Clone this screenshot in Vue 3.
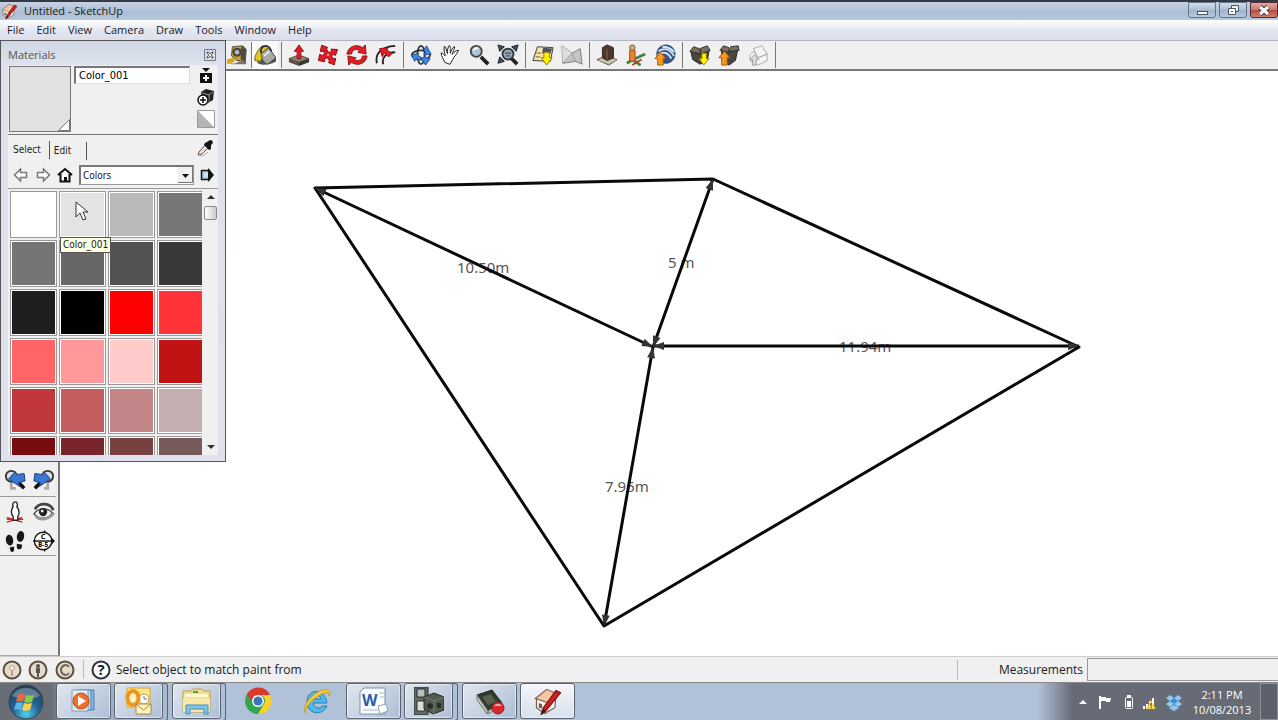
<script setup>
import { ref } from 'vue'

const menus = ['File', 'Edit', 'View', 'Camera', 'Draw', 'Tools', 'Window', 'Help']
const materialName = ref('Color_001')
const library = ref('Colors')
const measurement = ref('')

const swatches = [
  '#ffffff', '#e3e3e3', '#b9b9b9', '#777777',
  '#757575', '#676767', '#525252', '#383838',
  '#1f1e20', '#000000', '#ff0000', '#ff3338',
  '#ff6467', '#ff979b', '#fecaca', '#c11214',
  '#c2373b', '#c45e61', '#c28588', '#c4aeb0',
  '#780d11', '#78262b', '#774141', '#775b5a'
]

const toolGroups = [
  [
    { name: 'Push/Pull', art: '<path d="M1 16 12 12 23 16 12 20Z" fill="#8d8271" stroke="#4b443b"/><path d="M1 16v4l11 4v-4Z" fill="#5a5248"/><path d="M23 16v4l-11 4v-4Z" fill="#393530"/><path d="M12 1 7 8h3v8h4V8h3Z" fill="#e31b23" stroke="#8e1015"/>' },
    { name: 'Move', art: '<g transform="rotate(12 12 12)"><path d="M3 3 10 4 9 6 12 9 15 8 14 5 21 4 20 11 18 10 16 12 18 15 21 14 21 21 14 20 15 18 12 15 9 17 10 20 3 20 3 13 6 14 8 11 6 9 3 10Z" fill="#e31b23" stroke="#8e1015"/><path d="M11 11h2v2h-2Z" fill="#f3c4c0"/></g>' },
    { name: 'Rotate', art: '<g fill="#e31b23" stroke="#8e1015"><path d="M1 11C2 3 11-1 18 4l3-3 1 10-9-2 2-2C11 5 7 6 6 11Z"/><path d="M23 13c-1 8-10 12-17 7l-3 3-1-10 9 2-2 2c4 2 8 1 9-4Z"/></g>' },
    { name: 'Offset', art: '<path d="M2 21C0 11 6 3 22 2M9 22C7 15 12 9 22 9" fill="none" stroke="#222" stroke-width="2"/><path d="M15 14 10 10l-2 4-3-9 9-1-1 3 6 3Z" fill="#e31b23" stroke="#8e1015"/>' }
  ],
  [
    { name: 'Orbit', art: '<ellipse cx="12" cy="12" rx="10" ry="5" fill="none" stroke="#333" stroke-width="2"/><ellipse cx="12" cy="12" rx="4" ry="10" fill="none" stroke="#333" stroke-width="2"/><path d="m2 12 7-2v3l4 2-3 3-3-2-2 3ZM15 6l3-4 5 9-8 1 2-3ZM12 16l4-2 6 2-5 7Z" fill="#3e86df" stroke="#1c4d95"/>' },
    { name: 'Pan', art: '<path d="M8 21C6 18 3 15 2 12c2-1 3 1 5 2C6 11 4 8 4 4c2 0 3 4 5 7C8 8 8 4 9 2c2 0 2 5 3 8 0-3 1-6 3-8 1 2-1 6-1 9 2-3 3-5 6-6 0 4-4 8-4 11l-2 6Z" transform="rotate(12 12 12)" fill="#fff" stroke="#222"/>' },
    { name: 'Zoom', art: '<path d="m14 14 8 8" stroke="#222" stroke-width="4"/><circle cx="9" cy="8" r="6" fill="#a9c7d8" stroke="#444" stroke-width="2"/><path d="M6 7c1-2 3-3 5-2" stroke="#fff" stroke-width="2" fill="none"/>' },
    { name: 'Zoom Extents', art: '<path d="m1 1 7 2-5 5ZM23 1l-7 2 5 5ZM1 21l2-7 5 5Z" fill="#35506e" stroke="#222"/><path d="m15 15 7 7" stroke="#222" stroke-width="4"/><circle cx="12" cy="11" r="6" fill="#8fa4b4" stroke="#333" stroke-width="2"/><path d="M9 10h6M10 13h4" stroke="#333"/>' }
  ],
  [
    { name: 'Add Location', art: '<path d="m6 3 17 1-3 15-19-1Z" fill="#f2e7b0" stroke="#333"/><path d="m12 4 10 1-2 6-9-1Z" fill="#4c5261"/><path d="M5 10h5M4 14h5" stroke="#b8964b" stroke-width="2"/><path d="M13 9h6v6h3l-6 8-6-8h3Z" fill="#fff200" stroke="#837a00"/>' },
    { name: 'Toggle Terrain', art: '<path d="m1 2 11 8 9-5 2 17-7-3-14 2Z" fill="#c4c4c4" stroke="#777"/><path d="m1 2 11 8L2 21Z" fill="#dedede"/><path d="M12 10 16 19M12 10 2 21" fill="none" stroke="#999"/>' }
  ],
  [
    { name: 'Add Building', art: '<path d="m1 17 10-4 12 4-9 6Z" fill="#9cb9bb" stroke="#655038"/><path d="M4 17l10 3 7-3" stroke="#d8cda5" stroke-width="2" fill="none"/><path d="m7 4 5-3 7 3v11l-7 3-5-3Z" fill="#50352f" stroke="#32221e"/><path d="M12 6v11" stroke="#88675a"/>' },
    { name: 'Photo Textures', art: '<path d="M7 18 22 11M8 17l9 6M7 18l-5 3" stroke="#3e833f" stroke-width="3"/><path d="M8 23 18 17" stroke="#a83d27" stroke-width="2"/><rect x="5" y="6" width="6" height="13" rx="2" fill="#ed8123" stroke="#8c4d1b"/><circle cx="8" cy="4" r="3" fill="#d6ae79" stroke="#725333"/>' },
    { name: 'Preview in Google Earth', art: '<circle cx="13" cy="11" r="10" fill="#34558e" stroke="#1d3765"/><path d="M5 8c7-5 12-2 17 5M4 12c7-5 12-2 15 4M9 3c6 0 10 2 13 6" fill="none" stroke="#dce8f5" stroke-width="2"/><path d="M4 23v-7H1l6-7 6 7h-3v7Z" fill="#ff951e" stroke="#a2560b"/>' }
  ],
  [
    { name: 'Get Models', art: '<path d="m2 8 10 3 10-4-2 11-8 4-8-5Z" fill="#4a453d" stroke="#25221e"/><path d="m1 8 4-5 6 2 2 6ZM13 11l-1-6 8-3 3 5Z" fill="#776f62" stroke="#302c27"/><path d="M14 10h5v6h3l-6 7-5-7h3Z" fill="#fff200" stroke="#837a00"/>' },
    { name: 'Share Model', art: '<path d="m4 5 8 3 10-4-3 14-7 5-8-5Z" fill="#4a453d" stroke="#25221e"/><path d="m2 7 4-5 6 2v5ZM12 8l2-5 8-1 1 5Z" fill="#776f62" stroke="#302c27"/><path d="M4 23v-8H1l6-7 6 7h-3v8Z" fill="#ff951e" stroke="#a2560b"/>' },
    { name: 'Share Component', art: '<path d="m7 5 9-3 6 9-10 4ZM3 12l4-4 5 7 10-4v7l-10 5-8-4Z" fill="#f5f5f5" stroke="#aaa"/><path d="M6 23v-6H3l5-5 5 5h-3v6Z" fill="#ddd" stroke="#999"/>' }
  ]
]

const cameraTools = [
  [
    { name: 'Previous', art: '<circle cx="8" cy="8" r="6" fill="#ddd" stroke="#333" stroke-width="2"/><path d="m15 14 7 7" stroke="#111" stroke-width="4"/><path d="m5 11 7-8 2 3 8-1 1 8-7 2 1 4Z" fill="#3a77d2" stroke="#183b74"/><path d="M8 15v6h5" stroke="#aaa" stroke-width="3" fill="none"/>' },
    { name: 'Next', art: '<circle cx="16" cy="8" r="6" fill="#ddd" stroke="#333" stroke-width="2"/><path d="m9 14-7 7" stroke="#111" stroke-width="4"/><path d="m19 11-7-8-2 3-8-1-1 8 7 2-1 4Z" fill="#3a77d2" stroke="#183b74"/><path d="M16 15v6h-4" stroke="#aaa" stroke-width="3" fill="none"/>' }
  ],
  [
    { name: 'Position Camera', art: '<path d="m3 18 17 5M3 23l17-5M3 20h18" stroke="#d22" stroke-width="1.500"/><path d="M12 1c3 0 3 4 2 5 3 4 3 9 1 11v4h-5v-4c-3-3-2-8 0-11-1-2 0-5 2-5Z" fill="#fff" stroke="#222" stroke-width="1.500"/>' },
    { name: 'Look Around', art: '<path d="M2 9C7 1 19 2 22 10" fill="none" stroke="#444" stroke-width="3"/><path d="M1 14c5-7 15-7 20-1-4 7-14 8-20 1Z" fill="#f3f3f3" stroke="#444" stroke-width="1.500"/><path d="M3 17c6 5 14 3 20-4" stroke="#999" stroke-width="3" fill="none"/><circle cx="11" cy="12" r="4.500" fill="#222"/><circle cx="10" cy="11" r="1.500" fill="#fff"/>' }
  ],
  [
    { name: 'Walk', art: '<g fill="#171717"><ellipse cx="6" cy="11" rx="4" ry="6" transform="rotate(-10 6 11)"/><ellipse cx="18" cy="7" rx="4" ry="6" transform="rotate(10 18 7)"/><path d="m6 19 5-1v4c-1 3-4 2-4 0ZM14 15l6 1-1 4c-1 2-5 1-5-1Z"/></g>' },
    { name: 'Section Plane', art: '<path d="M12 0 24 12 12 24Z" fill="#111"/><circle cx="11" cy="12" r="9.500" fill="#fff" stroke="#111" stroke-width="1.500"/><path d="M0 12h22" stroke="#111" stroke-width="1.500"/><text x="11" y="10" text-anchor="middle" font-size="8" font-weight="bold">C</text><text x="11" y="19" text-anchor="middle" font-size="7" font-weight="bold">B-5</text>' }
  ]
]

const art = {
  tape: '<path d="M1 20c5 2 9 2 13-1h8v3H6Z" fill="#79746b"/><path d="M1 17 8 15l2 4-9 3Z" fill="#dba719"/><path d="m7 3 11-1 4 4-1 13-9-1-6-5Z" fill="#d0a51c" stroke="#444"/><path d="m18 2 4 4-1 13-5-2V5Z" fill="#4e4b49"/><circle cx="12" cy="9" r="5" fill="#484644"/><circle cx="12" cy="9" r="2.500" fill="#bbb"/>',
  bucket: '<path d="M3 20c3 4 14 3 21-1v-5L12 15Z" fill="#57564e"/><path d="M1 18C0 13 5 5 9 2l7 1-9 16Z" fill="#e1c71c" stroke="#5f5719"/><path d="m8 10 8-6 8 11-9 7c-4-1-7-5-7-12Z" fill="#a7aaa1" stroke="#41413b"/><path d="M8 10C5 2 16-2 19 8" fill="none" stroke="#333" stroke-width="2"/><path d="m11 13 6-5" stroke="#eee" stroke-width="2"/>',
  pencilHouse: '<path d="m3 10 8-6 9 3-1 11-9 5-7-5Z" fill="#fff6ee" stroke="#725b50"/><path d="m2 10 10-8 9 4-7 8Z" fill="#f6c6a3" stroke="#85634c"/><path d="M5 14v4l3 1v-4Z" fill="#666"/><path d="m7 24 2-6L20 3l4 2-13 16Z" fill="#cf2021" stroke="#741111"/><path d="m7 24 2-5 2 2Z" fill="#222"/>'
}

const dimensions = [
  { text: '10.50m', x: 457, y: 273 },
  { text: '5 m', x: 668, y: 268 },
  { text: '11.94m', x: 839, y: 352 },
  { text: '7.95m', x: 605, y: 492 }
]

const arrows = [
  [315, 188, 205], [653, 347, 25], [713, 179, -70], [653, 347, 110],
  [653, 346, 180], [1079, 346, 0], [653, 347, -80], [604, 626, 100]
]

const runningApps = [
  { name: 'Windows Media Player', kind: 'first', art: '<path d="M10 3h15v20H10Z" fill="#8eb7dc" stroke="#4d84b6"/><path d="M7 3h15v20H7Z" fill="#b9d4eb" stroke="#4d84b6"/><path d="M3 3h16v21H3Z" fill="#e2edf6" stroke="#779fc0"/><circle cx="12" cy="14" r="8" fill="#ef702d" stroke="#c14e16"/><path d="m9 9 8 5-8 5Z" fill="#fff"/>' },
  { name: 'Outlook', kind: 'stacked', art: '<path d="M3 1h23v19H3Z" fill="#ffe590" stroke="#d9a42b"/><circle cx="20" cy="12" r="5" fill="#fff" stroke="#bd9748"/><path d="M20 9v3h3" fill="none" stroke="#777"/><ellipse cx="9" cy="11" rx="5.500" ry="7" fill="#fff1bd" stroke="#ee961c" stroke-width="4"/><path d="M12 17h15v10H12Z" fill="#fff3ba" stroke="#a98748"/><path d="m12 17 7.500 6 7.500-6" fill="none" stroke="#a98748"/>' },
  { name: 'Windows Explorer', kind: 'stacked', art: '<path d="M1 4h8l2-2h9l2 2h6v21H1Z" fill="#f3dd8d" stroke="#bba152"/><path d="M3 7h23v3H3Z" fill="#fff9cf"/><path d="M1 11h27v14H1Z" fill="#f7e9a5"/><path d="M4 27v-9h22v9h-4v-5H8v5Z" fill="#7ec5eb" stroke="#438fb8"/><path d="M11 5h5" stroke="#46a257" stroke-width="2"/>' },
  { name: 'Google Chrome', kind: 'plain', art: '<circle cx="15" cy="14" r="13" fill="#34a64b"/><path d="M4 7A13 13 0 0 1 27 8H15a6 6 0 0 0-5 9Z" fill="#dd3a2e"/><path d="M27 8a13 13 0 0 1-12 19l6-10a6 6 0 0 0-3-9Z" fill="#fbd22d"/><circle cx="15" cy="14" r="6" fill="#fff"/><circle cx="15" cy="14" r="4.500" fill="#3874bd"/>' },
  { name: 'Internet Explorer', kind: 'plain', art: '<path d="M26 19c-5 11-21 8-20-5S24 1 26 16H12c1 6 8 6 9 3ZM12 12h8c-1-5-7-5-8 0Z" fill="#4fb9ea" stroke="#287eb6" fill-rule="evenodd"/><path d="M5 26C-2 20 16 0 27 3c3 1 2 4 1 6 0-5-5-4-11 0C9 14 3 22 5 26Z" fill="#f7cf37" stroke="#c49a20"/>' },
  { name: 'Word', kind: 'single', art: '<path d="M5 1h21v26H1V5Z" fill="#fff" stroke="#6f91b8"/><path d="M20 6h5M21 10h4M4 23h19" stroke="#9bb5d2"/><text x="3" y="19" font-size="16" font-weight="bold" fill="#285eac">W</text><path d="m19 19 8-2 2 7-8 3Z" fill="#fff" stroke="#89a2bd"/>' },
  { name: 'Camera Utility', kind: 'stacked', art: '<path d="M0 0h14v28H0Z" fill="#646a66" stroke="#252c28"/><path d="M3 2h8v8H3Z" fill="#b8beb9" stroke="#252c28"/><path d="M3 14h8v10H3Z" fill="#dfdfd9" stroke="#333"/><path d="m10 10 10-4 10 4v13l-11 4-9-5Z" fill="#515b4f" stroke="#242b23"/><path d="m10 10 10 4 10-4M20 14v13" fill="none" stroke="#717d6d"/><circle cx="16" cy="19" r="3" fill="#282e28"/><path d="M23 16h4v5h-4Z" fill="#282e28"/>' },
  { name: 'Recorder', kind: 'single', art: '<path d="m2 8 15-5 10 13-14 8Z" fill="#313c2f" stroke="#1d241c"/><path d="M2 8v5l10 14 1-3ZM13 24v3l14-8v-3Z" fill="#bbc2bb" stroke="#777"/><path d="m7 10 9-3 5 8-8 3Z" fill="#566149"/><circle cx="23" cy="21" r="6" fill="#d82830" stroke="#921b21"/><path d="M19 19c2-3 6-3 8 0Z" fill="#f0a9aa"/>' },
  { name: 'SketchUp', kind: 'single current', art: '<g transform="scale(1.150)">' + art.pencilHouse + '</g>' }
]
</script>

<template>
  <div class="desktop">
    <header class="titlebar">
      <svg class="app-icon" viewBox="0 0 24 24" v-html="art.pencilHouse"></svg>
      <h1>Untitled - SketchUp</h1>
      <div class="window-buttons">
        <button type="button" aria-label="Minimize"><svg viewBox="0 0 28 16"><rect x="9.500" y="9.500" width="10" height="3" fill="#fff" stroke="#4b5563" /></svg></button>
        <button type="button" aria-label="Restore"><svg viewBox="0 0 28 16"><path d="M12.500 3.500h7v6h-7Z" fill="#eee" stroke="#4b5563" /><path d="M9.500 6.500h7v6h-7Z" fill="#fff" stroke="#4b5563" /><path d="M12 9h2v1h-2Z" fill="#4b5563" /></svg></button>
        <button type="button" class="close" aria-label="Close"><svg viewBox="0 0 28 16"><path d="m10 5 8 7m0-7-8 7" stroke="#553036" stroke-width="5" /><path d="m10 5 8 7m0-7-8 7" stroke="#fff" stroke-width="3" /></svg></button>
      </div>
    </header>

    <nav class="menubar">
      <button v-for="menu in menus" :key="menu" type="button">{{ menu }}</button>
    </nav>

    <div class="toolbar">
      <button type="button" class="tool" aria-label="Tape Measure"><svg viewBox="0 0 24 24" v-html="art.tape"></svg></button>
      <span class="divider tight"></span>
      <button type="button" class="tool active" aria-label="Paint Bucket"><svg viewBox="0 0 24 24" v-html="art.bucket"></svg></button>
      <span class="divider"></span>
      <template v-for="(group, i) in toolGroups" :key="i">
        <button v-for="tool in group" :key="tool.name" type="button" class="tool" :aria-label="tool.name">
          <svg viewBox="0 0 24 24" v-html="tool.art"></svg>
        </button>
        <span class="divider"></span>
      </template>
    </div>

    <main class="workspace">
      <aside class="camera-tools">
        <div v-for="(row, i) in cameraTools" :key="i" class="camera-row">
          <button v-for="tool in row" :key="tool.name" type="button" :aria-label="tool.name">
            <svg viewBox="0 0 24 24" v-html="tool.art"></svg>
          </button>
        </div>
      </aside>
      <svg class="canvas" role="img" aria-label="Dimensioned polygon">
        <g transform="translate(-60 -71)">
          <g class="labels">
            <text v-for="d in dimensions" :key="d.text" :x="d.x" :y="d.y">{{ d.text }}</text>
          </g>
          <path class="edges" d="M315 188 713 179 1079 347 604 626ZM315 188 653 347 713 179M653 346H1079M653 347 604 626" />
          <path v-for="(a, i) in arrows" :key="i" class="arrow" d="M0 0-11-4v8Z" :transform="`translate(${a[0]} ${a[1]}) rotate(${a[2]})`" />
        </g>
      </svg>
    </main>

    <footer class="statusbar">
      <svg class="status-icons" viewBox="0 0 78 24">
        <g fill="#e6dccb" stroke="#5c4e3c" stroke-width="2"><circle cx="12" cy="12" r="8.500" /><circle cx="38" cy="12" r="8.500" /><circle cx="65" cy="12" r="8.500" /></g>
        <circle cx="12" cy="10" r="2.500" fill="#f3eee8" stroke="#bd9e8d" /><path d="M12 13v5" stroke="#bd9e8d" stroke-width="2" />
        <circle cx="38" cy="8" r="2" fill="#555" /><path d="M36 10h4v5h-1v4h-2v-4h-1Z" fill="#555" />
        <path d="M69 9c-3-4-8-1-8 3s5 7 8 3" fill="none" stroke="#70675a" stroke-width="2" />
      </svg>
      <span class="status-rule"></span>
      <button type="button" class="help" aria-label="Help"><svg viewBox="0 0 20 20"><circle cx="10" cy="10" r="8.500" fill="#fff" stroke="#29343e" stroke-width="2" /><text x="10" y="15" text-anchor="middle" font-size="15" font-weight="bold" fill="#17202a">?</text></svg></button>
      <span class="hint">Select object to match paint from</span>
      <label for="measurements">Measurements</label>
      <input id="measurements" v-model="measurement" type="text" />
    </footer>

    <div class="taskbar">
      <button type="button" class="start" aria-label="Start">
        <svg viewBox="0 0 36 36">
          <defs><radialGradient id="orb" cx="50%" cy="85%" r="85%"><stop offset="0" stop-color="#4fd0f0" /><stop offset=".45" stop-color="#246495" /><stop offset="1" stop-color="#22384e" /></radialGradient></defs>
          <circle cx="18" cy="18" r="17" fill="url(#orb)" stroke="#334653" />
          <path d="M4 12C9 1 27 1 32 12c-8 4-19 4-28 0Z" fill="#bbccd8" opacity=".4" />
          <path d="M10 11c3-2 5-1 7 0l-2 7c-2-1-4-1-7 0Z" fill="#ef6937" /><path d="M18 11c3 1 5 1 8 0l-2 7c-3 1-5 1-8 0Z" fill="#91c843" />
          <path d="M8 19c3-1 5-1 7 0l-2 7c-2-1-4-1-7 0Z" fill="#59b5ec" /><path d="M16 19c3 1 5 1 8 0l-2 7c-3 1-5 1-8 0Z" fill="#fed14a" />
        </svg>
      </button>
      <div class="apps">
        <button v-for="app in runningApps" :key="app.name" type="button" class="app" :class="app.kind" :aria-label="app.name">
          <svg viewBox="0 0 30 28" v-html="app.art"></svg>
        </button>
      </div>
      <div class="tray">
        <svg class="tray-icons" viewBox="0 0 106 24">
          <path d="m0 14 4-4 4 4Z" fill="#fff" />
          <path d="M21 6v13" stroke="#fff" stroke-width="2" /><path d="M22 7h5v1h5l-1 4h-4v-1h-5Z" fill="#fff" />
          <rect x="46.500" y="7.500" width="7" height="11" rx="1" fill="none" stroke="#fff" /><path d="M48 5h4v2h-4ZM48 11h4v6h-4Z" fill="#fff" />
          <path d="M64 16h2v3h-2ZM67 14h2v5h-2ZM70 11h2v8h-2ZM73 8h2v11h-2Z" fill="#fff" /><path d="m72 10-5 9h10Z" fill="#ffd42a" opacity=".8" /><path d="M72 13v3m0 1v1" stroke="#333" />
          <path d="m87 8 4-3 4 3 4-3 4 3-4 3 4 3-4 3-4-3-4 3-4-3 4-3ZM90 18l5-3 5 3-5 3Z" fill="#8bcaf3" /><path d="m91 11 4-3 4 3-4 3Z" fill="#4389c6" />
        </svg>
        <time datetime="2013-08-10T14:11"><span>2:11 PM</span><span>10/08/2013</span></time>
        <button type="button" class="show-desktop" aria-label="Show desktop"></button>
      </div>
    </div>

    <section class="materials" aria-label="Materials">
      <header class="panel-title">
        <h2>Materials</h2>
        <button type="button" aria-label="Close panel"><svg viewBox="0 0 12 12"><path d="M.5.500h11v11H.5Z" fill="none" stroke="#777" /><path d="m3 3 6 6m0-6-6 6" stroke="#555" stroke-width="2" /><path d="m4 4 4 4m0-4-4 4" stroke="#eee" /></svg></button>
      </header>
      <div class="panel-body">
        <div class="current-material">
          <div class="preview"><svg viewBox="0 0 12 12"><path d="M11.500.500v11H.5Z" fill="#fff" stroke="#777" /></svg></div>
          <input v-model="materialName" type="text" aria-label="Material name" />
          <div class="side-buttons">
            <button type="button" aria-label="Secondary pane"><svg viewBox="0 0 18 18"><path d="M5 2h8L9 6Z" fill="#111" /><path d="M3 7h12v10H3Z" fill="#111" /><path d="M9 9v6M6 12h6" stroke="#fff" stroke-width="2" /></svg></button>
            <button type="button" aria-label="Create material"><svg viewBox="0 0 18 18"><path d="m4 4 5-3 8 2-1 9-5 3-6-4Z" fill="#222" /><path d="m5 5 7 2 4-3M12 7v7" fill="none" stroke="#999" /><circle cx="6" cy="12" r="5" fill="#fff" stroke="#111" stroke-width="1.500" /><path d="M6 9v6M3 12h6" stroke="#111" stroke-width="1.500" /></svg></button>
            <button type="button" aria-label="Default material"><svg viewBox="0 0 18 18"><path d="M.5.500h17v17H.5Z" fill="#fff" stroke="#999" /><path d="M1 1v16h16Z" fill="#b4b4b4" /></svg></button>
          </div>
        </div>
        <div class="tabs">
          <button type="button" class="selected">Select</button>
          <button type="button">Edit</button>
          <button type="button" class="sampler" aria-label="Sample paint"><svg viewBox="0 0 18 18"><path d="m10 5 3 3-7 7-4 1 1-3Z" fill="#e7e1dc" stroke="#66574d" /><path d="M3 16c3 2 6 0 9-3" fill="none" stroke="#b9a79b" /><path d="m9 4 2-1 3-2c3 0 4 3 1 5v4l-2 1-5-5Z" fill="#151515" /></svg></button>
        </div>
        <div class="library">
          <button type="button" aria-label="Back"><svg viewBox="0 0 16 16"><path d="m1.500 8 6-6v3.500h6v5h-6V14Z" fill="#fff" stroke="#777" stroke-width="1.500" /></svg></button>
          <button type="button" aria-label="Forward"><svg viewBox="0 0 16 16"><path d="m14.500 8-6-6v3.500h-6v5h6V14Z" fill="#fff" stroke="#777" stroke-width="1.500" /></svg></button>
          <button type="button" aria-label="In model"><svg viewBox="0 0 16 16"><path d="m1 8 7-6 7 6M3.500 7v7.500h9V7" fill="#fff" stroke="#111" stroke-width="2" /><path d="M7 10h3v5H7Z" fill="#111" /></svg></button>
          <div class="combo">
            <select v-model="library" aria-label="Material library"><option>Colors</option></select>
            <svg viewBox="0 0 15 16"><path d="M0 0h15v16H0Z" fill="#f0f0f0" /><path d="M14.500 0v15.500H0" fill="none" stroke="#777" /><path d="M4 7h7l-3.500 4Z" fill="#111" /></svg>
          </div>
          <button type="button" class="details" aria-label="Details"><svg viewBox="0 0 16 16"><path d="M2.500 3.500h8v9h-8Z" fill="#abc9df" stroke="#111" stroke-width="1.500" /><path d="m9 1 6 7-6 7Z" fill="#111" /><path d="M5 6h4v4H5Z" fill="#d3e4f0" /></svg></button>
        </div>
        <div class="swatch-area">
          <div class="swatches">
            <button v-for="(color, i) in swatches" :key="i" type="button" :aria-label="`Color_${String(i).padStart(3, '0')}`" :style="{ backgroundColor: color }"></button>
          </div>
          <div class="scrollbar">
            <svg viewBox="0 0 8 5"><path d="m0 5 4-4 4 4Z" fill="#333" /></svg>
            <span class="thumb"></span>
            <svg class="down" viewBox="0 0 8 5"><path d="m0 0 4 4 4-4Z" fill="#333" /></svg>
          </div>
        </div>
      </div>
      <div class="tooltip" role="tooltip">Color_001</div>
      <svg class="pointer" viewBox="0 0 13 20"><path d="M1 1v15l4-4 3 7 3-1-3-7h5Z" fill="#fff" stroke="#333" /></svg>
    </section>
  </div>
</template>

<style>
body { margin: 0; }
</style>

<style scoped>
* { box-sizing: border-box; }
button { border: 0; padding: 0; background: none; font: inherit; color: inherit; display: flex; align-items: center; justify-content: center; }
svg { display: block; flex: none; }
h1, h2 { margin: 0; font-weight: normal; }
.desktop { position: relative; display: flex; flex-direction: column; height: 100vh; overflow: hidden; background: #fff; color: #1a1a1a; font: 11px/16px "Open Sans", "Noto Sans", sans-serif; }

.titlebar { display: flex; align-items: center; height: 20px; flex: none; border-top: 2px solid #343a45; background: linear-gradient(#c6d2e2, #aabed6 60%, #b8c8dc); }
.app-icon { width: 16px; height: 16px; margin: 0 7px 0 1px; }
.titlebar h1 { font-size: 11px; flex: 1; }
.window-buttons { display: flex; align-self: flex-start; gap: 3px; }
.window-buttons button { width: 28px; height: 16px; border: 1px solid #64758b; border-radius: 0 0 3px 3px; background: linear-gradient(#d3deeb, #acbfd5 50%, #9cb1ca 50%, #b8cadf); }
.window-buttons svg { width: 28px; height: 16px; }
.window-buttons .close { border-color: #542d31; background: linear-gradient(#dfaaa3, #cb776d 50%, #b3493c 50%, #cf8177); }

.menubar { display: flex; gap: 12px; height: 21px; flex: none; padding-left: 7px; background: linear-gradient(#fff, #e4e7f2 50%, #dcdfeb); border-bottom: 1px solid #b5b7c0; }

.toolbar { display: flex; align-items: center; height: 30px; flex: none; padding-left: 222px; background: #f0f0f0; border-bottom: 2px solid #777; }
.tool { width: 29px; height: 28px; flex: none; }
.tool svg { width: 22px; height: 22px; }
.tool.active { width: 26px; background: #fafafa; }
.divider { width: 1px; height: 26px; margin: 0 2px 0 3px; background: #777; flex: none; }
.divider.tight { margin: 0; }

.workspace { display: flex; flex: 1; min-height: 0; }
.camera-tools { width: 60px; flex: none; padding-top: 394px; background: #f0f0f0; border-right: 2px solid #777; border-bottom: 1px solid #aaa; }
.camera-row { display: flex; width: 56px; height: 29px; }
.camera-row button { width: 29px; height: 29px; flex: none; }
.camera-row svg { width: 22px; height: 22px; }
.camera-row:first-child { height: 32px; border-bottom: 1px solid #999; }
.camera-row:last-child { height: 30px; border-bottom: 1px solid #999; }
.canvas { flex: 1; height: 100%; min-width: 0; }
.edges { fill: none; stroke: #0a0a0a; stroke-width: 3; stroke-linejoin: round; }
.arrow { fill: #333; }
.labels { font: 15px "Noto Sans", sans-serif; fill: #555; }

.statusbar { display: flex; align-items: center; height: 27px; flex: none; background: #f0f0f0; border-top: 1px solid #ccc; border-bottom: 1px solid #888; font-size: 12px; }
.status-icons { width: 78px; height: 24px; }
.status-rule { width: 1px; height: 19px; background: #bbb; margin: 0 7px 0 5px; }
.help { width: 20px; height: 20px; }
.help svg { width: 20px; height: 20px; }
.hint { margin-left: 5px; flex: 1; }
.statusbar label { width: 130px; padding-right: 4px; text-align: right; border-left: 1px solid #bbb; line-height: 20px; }
.statusbar input { width: 191px; height: 23px; border: 1px solid #999; border-right: 0; background: #f0f0f0; padding: 0 4px; }

.taskbar { display: flex; height: 37px; flex: none; background: linear-gradient(90deg, #686d76, #686d76 50px, #99a6b8 70px, #b1c1d8 200px, #b1c1d8 calc(100% - 240px), #666b75 calc(100% - 205px)); }
.start { width: 51px; }
.start svg { width: 36px; height: 36px; }
.apps { display: flex; flex: 1; gap: 3px; padding-left: 5px; }
.app { height: 36px; width: 55px; border: 1px solid #59636f; border-radius: 3px; box-shadow: inset 0 0 0 1px #ffffff88; background: linear-gradient(135deg, #dfe6ef, #aebfd5); }
.app svg { width: 30px; height: 28px; }
.app.stacked { position: relative; width: 49px; margin-right: 6px; }
.app.stacked::after { content: ""; position: absolute; left: 47px; top: -1px; width: 5px; height: 36px; border: 1px solid #59636f; border-left: 0; border-radius: 0 3px 3px 0; }
.app.plain { border-color: transparent; box-shadow: none; background: none; }
.app.current { background: linear-gradient(#f3f5f9, #d9e1ec); }
.tray { display: flex; align-items: center; color: #fff; }
.tray-icons { width: 106px; height: 24px; }
.tray time { display: flex; flex-direction: column; align-items: center; width: 62px; margin: 0 7px 0 6px; font-size: 11px; line-height: 15px; }
.show-desktop { width: 18px; height: 37px; border: 1px solid #8b9099; background: #5c616b; }

.materials { position: absolute; left: 0; top: 40px; width: 226px; padding: 0 7px 6px; border: 1px solid #555; background: linear-gradient(#cfd6e4, #dde2ee 24px, #dfe1ec); font: 10px/14px "DejaVu Sans Condensed", "Noto Sans", sans-serif; }
.panel-title { display: flex; align-items: center; justify-content: space-between; height: 24px; padding: 4px 2px 0 0; color: #555; }
.panel-title h2 { font-size: 11px; font-family: "Open Sans", "Noto Sans", sans-serif; }
.panel-title svg { width: 12px; height: 12px; }
.panel-body { background: #f0f0f0; }
.current-material { display: flex; height: 70px; padding-top: 1px; border-bottom: 1px solid #777; }
.preview { display: flex; align-items: flex-end; justify-content: flex-end; width: 62px; height: 66px; margin: 0 3px 0 1px; border: 1px solid #777; background: #e1e1e1; }
.preview svg { width: 12px; height: 12px; }
.current-material input { width: 116px; min-width: 0; height: 18px; padding: 0 3px; border: 1px solid #ddd; border-top: 2px solid #777; border-left: 2px solid #777; background: #fff; font: inherit; font-size: 11px; }
.side-buttons { display: flex; flex-direction: column; gap: 4px; margin-left: 7px; }
.side-buttons svg, .sampler svg { width: 18px; height: 18px; }
.side-buttons button { height: 18px; }
.tabs { display: flex; align-items: flex-start; height: 27px; padding: 4px 4px 0 5px; }
.tabs button { height: 18px; padding-right: 15px; border-right: 1px solid #555; margin: 3px 4px 0 0; }
.tabs .selected { padding-right: 8px; margin-top: 2px; }
.tabs .sampler { margin: 0 0 0 auto; padding: 0; border: 0; }
.library { display: flex; align-items: center; height: 27px; padding-left: 5px; border-bottom: 1px solid #999; }
.library > button { width: 16px; margin-right: 6px; }
.library > button svg { width: 16px; height: 16px; }
.combo { position: relative; width: 115px; height: 20px; }
.combo select { appearance: none; width: 100%; height: 20px; border: 1px solid #999; border-top: 2px solid #777; border-left: 2px solid #777; border-radius: 0; background: #fff; padding: 0 2px; font: inherit; color: inherit; }
.combo svg { position: absolute; right: 1px; top: 2px; width: 15px; height: 16px; pointer-events: none; }
.library > .details { margin: 0 0 0 5px; }
.swatch-area { display: flex; gap: 2px; height: 266px; padding: 2px 1px 0 2px; }
.swatches { display: grid; grid-template-columns: repeat(4, 47px); grid-auto-rows: 47px; gap: 2px; width: 192px; overflow: hidden; flex: none; }
.swatches button { border: 1px solid #999; box-shadow: inset 0 0 0 1px #fff; }
.scrollbar { display: flex; flex-direction: column; align-items: center; width: 14px; padding: 3px 0 5px; }
.scrollbar svg { width: 8px; height: 5px; }
.thumb { width: 13px; height: 14px; margin-top: 7px; border: 1px solid #888; border-radius: 2px; background: linear-gradient(90deg, #fff, #ccc); }
.scrollbar .down { margin-top: auto; }
.tooltip { position: absolute; left: 59px; top: 196px; padding: 0 2px; border: 1px solid #555; background: #ffffe1; }
.pointer { position: absolute; left: 74px; top: 160px; width: 13px; height: 20px; }
</style>
